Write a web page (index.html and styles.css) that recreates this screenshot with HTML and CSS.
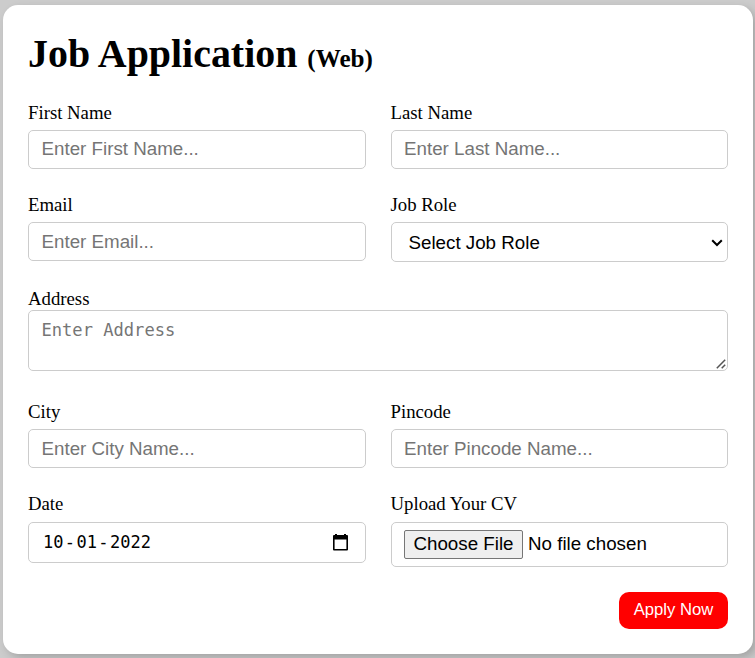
FILE: index.html
```html
<!DOCTYPE html>
<html lang="en">
<head>
<meta charset="utf-8">
<title>Job Application</title>
<link rel="stylesheet" href="styles.css">
</head>
<body>
<main class="card">
  <h1 class="title">Job Application <span class="title-note">(Web)</span></h1>
  <form class="form">
    <div class="field">
      <label class="label" for="first">First Name</label>
      <input class="control control-name" id="first" type="text" placeholder="Enter First Name...">
    </div>
    <div class="field">
      <label class="label" for="last">Last Name</label>
      <input class="control control-name" id="last" type="text" placeholder="Enter Last Name...">
    </div>
    <div class="field">
      <label class="label" for="email">Email</label>
      <input class="control" id="email" type="email" placeholder="Enter Email...">
    </div>
    <div class="field">
      <label class="label" for="role">Job Role</label>
      <div class="overlay-wrap">
        <select class="control control-select" id="role">
          <option>Select Job Role</option>
        </select>
        <svg class="chevron" width="12" height="8" viewBox="0 0 12 8" aria-hidden="true">
          <path d="M1.2 1.2L6 6l4.8-4.8" fill="none" stroke="#000" stroke-width="2"/>
        </svg>
      </div>
    </div>
    <div class="field field-wide">
      <label class="label label-tight" for="address">Address</label>
      <div class="overlay-wrap">
        <textarea class="control control-area" id="address" placeholder="Enter Address"></textarea>
        <svg class="grip" width="10" height="10" viewBox="0 0 10 10" aria-hidden="true">
          <path d="M.8 9.2L9.2.8M5.7 9.2l3.5-3.5" fill="none" stroke="#555" stroke-width="1.5"/>
        </svg>
      </div>
    </div>
    <div class="field">
      <label class="label" for="city">City</label>
      <input class="control" id="city" type="text" placeholder="Enter City Name...">
    </div>
    <div class="field">
      <label class="label" for="pincode">Pincode</label>
      <input class="control" id="pincode" type="text" placeholder="Enter Pincode Name...">
    </div>
    <div class="field">
      <span class="label label-loose">Date</span>
      <div class="control control-date">
        <span class="date"><span>10</span><span class="dash">-</span><span>01</span><span class="dash">-</span><span>2022</span></span>
        <svg class="calendar" width="15" height="17" viewBox="0 0 15 17" aria-hidden="true">
          <path fill-rule="evenodd" d="M2 0h2v1h7V0h2v1h1q1 0 1 1v13.5q0 1-1 1H1q-1 0-1-1V2q0-1 1-1h1zM1.6 5.6V15h11.8V5.6z"/>
        </svg>
      </div>
    </div>
    <div class="field">
      <label class="label label-loose" for="cv">Upload Your CV</label>
      <input class="control control-file" id="cv" type="file">
    </div>
    <div class="actions">
      <button class="submit" type="button">Apply Now</button>
    </div>
  </form>
</main>
</body>
</html>
```

FILE: styles.css
```css
* {
  box-sizing: border-box;
}

body {
  margin: 0;
  height: 658px;
  overflow: hidden;
  background: #ccc;
  font-family: "Liberation Serif", "Times New Roman", serif;
  color: #000;
}

.card {
  width: 750px;
  height: 649px;
  margin: 5px 0 0 3px;
  padding: 25px;
  border-radius: 15px;
  background: #fff;
  box-shadow: 4px 4px 10px rgba(0, 0, 0, 0.2);
}

.title {
  margin: 0;
  height: 72px;
  font-size: 39.9px;
  line-height: 48px;
}

.title-note {
  font-size: 25.1px;
}

.form {
  display: grid;
  grid-template-columns: 1fr 1fr;
  grid-template-rows: 67px 69px 88px 67px 74px 37px;
  gap: 25px;
}

.field {
  display: flex;
  flex-direction: column;
}

.field-wide {
  grid-column: 1 / -1;
}

.label {
  height: 28px;
  font-size: 18.75px;
  line-height: 22px;
}

.label-tight {
  height: 22px;
}

.label-loose {
  height: 29px;
}

.control {
  width: 100%;
  height: 39px;
  margin: 0;
  padding: 0 12.5px;
  border: 1px solid #ccc;
  border-radius: 5px;
  background: #fff;
  font-family: "Liberation Sans", Arial, sans-serif;
  font-size: 18.75px;
  color: #000;
}

.control::placeholder {
  color: #757575;
}

.control-name {
  padding-bottom: 2px;
}

.overlay-wrap {
  position: relative;
  display: flex;
}

.control-select {
  height: 40px;
  padding: 0 17px;
  appearance: none;
}

.chevron {
  position: absolute;
  top: 17px;
  right: 5px;
  pointer-events: none;
}

.control-area {
  height: 61px;
  padding: 9px 12.5px;
  font-family: "DejaVu Sans Mono", Consolas, monospace;
  font-size: 17.1px;
  resize: none;
}

.grip {
  position: absolute;
  right: 2px;
  bottom: 2px;
  pointer-events: none;
}

.control-date {
  display: flex;
  align-items: center;
  justify-content: space-between;
  height: 41px;
  padding: 0 17px 0 14px;
  font-family: "DejaVu Sans Mono", Consolas, monospace;
  font-size: 17px;
}

.date {
  display: flex;
  padding-bottom: 2px;
}

.dash {
  width: 13px;
  text-align: center;
}

.control-file {
  height: 45px;
  padding: 7px 12.5px;
}

.control-file::file-selector-button {
  width: 119px;
  height: 29px;
  margin: 0 5px 0 0;
  padding: 0 0 2px;
  border: 1px solid #767676;
  border-radius: 2px;
  background: #efefef;
  font-family: inherit;
  font-size: 18.75px;
  color: #000;
}

.actions {
  grid-column: 1 / -1;
  display: flex;
  justify-content: flex-end;
}

.submit {
  width: 109px;
  height: 37px;
  padding: 0 0 2px;
  border: 0;
  border-radius: 10px;
  background: #f00;
  color: #fff;
  font-family: "Liberation Sans", Arial, sans-serif;
  font-size: 16.67px;
}
```
